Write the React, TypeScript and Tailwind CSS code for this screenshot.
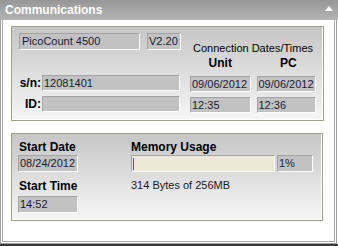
import React from "react";

const font = { fontFamily: '"Liberation Sans", Arial, sans-serif' };

function Field({ w, h = 16, children, className = "" }: { w: number; h?: number; children?: React.ReactNode; className?: string }) {
  return (
    <div
      className={`flex items-center bg-[#c2c2c2] border border-t-[#a3a3a3] border-l-[#a3a3a3] border-r-white border-b-white pl-[1px] text-[11px] leading-none text-[#1a1a33] ${className}`}
      style={{ width: w, height: h }}
    >
      {children}
    </div>
  );
}

export default function App() {
  return (
    <div className="w-[338px] h-[246px] bg-white overflow-hidden flex flex-col" style={font}>
      <div className="h-[20px] w-[338px] flex items-center justify-between bg-gradient-to-b from-[#979797] to-[#b4b4b4] pl-[5px] pr-[5px]">
        <span className="text-white font-bold text-[12px] leading-none">Communications</span>
        <svg width="8" height="5" viewBox="0 0 8 5" className="mb-[3px]">
          <polygon points="0,5 8,5 4,0" fill="#ffffff" />
        </svg>
      </div>
      <div className="w-[337px] h-[224px] border-l border-r border-b border-[#a0a0a0] px-[1px] pb-[1px] bg-white flex">
        <div className="flex-1 border-l border-r border-b border-[#a8a8a8] flex flex-col pl-[8px] pt-[6px]">
          {/* Top panel */}
          <div className="w-[313px] h-[95px] border border-[#a09f90] shadow-[inset_-1px_-1px_0_#ffffff] bg-gradient-to-b from-[#c6c6c6] to-[#f6f6f6] flex">
            <div className="flex flex-col w-[169px] pt-[6px]">
              <div className="flex ml-[7px] gap-[7px]">
                <Field w={121} h={17} className="text-[10.5px] pl-[2px]">PicoCount 4500</Field>
                <Field w={34} h={17}>V2.20</Field>
              </div>
              <div className="flex items-center mt-[25px]">
                <span className="w-[29px] text-right font-bold text-[12px] leading-none text-black">s/n:</span>
                <Field w={138} className="ml-[1px]">12081401</Field>
              </div>
              <div className="flex items-center mt-[5px]">
                <span className="w-[29px] text-right font-bold text-[12px] leading-none text-black">ID:</span>
                <Field w={138} className="ml-[1px]" />
              </div>
            </div>
            <div className="flex flex-col ml-[9px] w-[126px] pt-[14px]">
              <div className="text-center text-[11px] leading-[14px] text-black">Connection Dates/Times</div>
              <div className="flex gap-[6px] h-[14px] mt-[1px]">
                <span className="w-[61px] text-center font-bold text-[12px] leading-[14px] text-black">Unit</span>
                <span className="w-[60px] text-center font-bold text-[12px] leading-[14px] text-black pl-[4px]">PC</span>
              </div>
              <div className="flex gap-[6px] mt-[6px]">
                <Field w={61}>09/06/2012</Field>
                <Field w={60}>09/06/2012</Field>
              </div>
              <div className="flex gap-[6px] mt-[5px]">
                <Field w={61}>12:35</Field>
                <Field w={60}>12:36</Field>
              </div>
            </div>
          </div>
          {/* Bottom panel */}
          <div className="mt-[12px] w-[312px] h-[88px] border border-[#a09f90] shadow-[inset_-1px_-1px_0_#ffffff] bg-gradient-to-b from-[#c6c6c6] to-[#f6f6f6] flex">
            <div className="flex flex-col pl-[6px] pt-[6px] w-[66px]">
              <span className="h-[14px] font-bold text-[12px] leading-[14px] text-black pl-[1px]">Start Date</span>
              <Field w={60} h={17} className="mt-[1px]">08/24/2012</Field>
              <span className="mt-[7px] h-[14px] font-bold text-[12px] leading-[14px] text-black pl-[1px]">Start Time</span>
              <Field w={60} h={17} className="mt-[3px]">14:52</Field>
            </div>
            <div className="flex flex-col ml-[53px] pt-[6px]">
              <span className="h-[14px] font-bold text-[12px] leading-[14px] text-black">Memory Usage</span>
              <div className="flex gap-[2px] mt-[1px]">
                <div className="w-[144px] h-[17px] bg-[#ece9d8] border border-t-[#a3a3a3] border-l-[#a3a3a3] border-r-white border-b-white flex items-center pl-[1px]">
                  <div className="w-[1px] h-[12px] bg-[#3a5aa8]" />
                </div>
                <Field w={36} h={17}>1%</Field>
              </div>
              <span className="mt-[6px] text-[11px] leading-[14px] text-[#1a1a1a]">314 Bytes of 256MB</span>
            </div>
          </div>
        </div>
      </div>
      <div className="flex-1 bg-[#3a3a3a]" />
    </div>
  );
}
